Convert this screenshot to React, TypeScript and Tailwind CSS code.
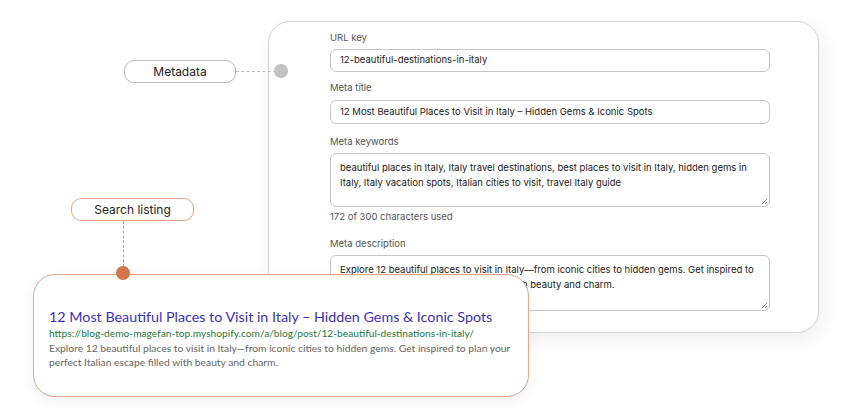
const form = "font-['Inter','Liberation_Sans',sans-serif]";
const serp = "font-['Lato','Noto_Sans',sans-serif]";

function Label({ children, className = "" }: { children: React.ReactNode; className?: string }) {
  return <div className={`h-[12px] text-[9.5px] leading-[12px] text-[#555] ${className}`}>{children}</div>;
}

function Field({ value, className = "" }: { value: string; className?: string }) {
  return (
    <div
      className={`flex items-center rounded-[6px] border border-[#c6c6c6] bg-white px-[9px] text-[9.5px] text-[#222] ${className}`}
    >
      {value}
    </div>
  );
}

function Grip() {
  return (
    <svg className="absolute bottom-[1px] right-[1px]" width="8" height="8" viewBox="0 0 8 8">
      <path d="M7 2 L2 7 M7 5 L5 7" stroke="#777" strokeWidth="0.9" />
    </svg>
  );
}

function Area({ text, className = "" }: { text: string; className?: string }) {
  return (
    <div
      className={`relative rounded-[6px] border border-[#c6c6c6] bg-white px-[9px] pt-[6px] text-[9.5px] leading-[15px] text-[#222] ${className}`}
    >
      {text}
      <Grip />
    </div>
  );
}

export default function App() {
  return (
    <div className={`relative h-[420px] w-[850px] overflow-hidden bg-white ${form}`}>
      {/* editor card */}
      <div className="ml-[268px] mt-[21px] flex h-[312px] w-[551px] flex-col rounded-[22px] border border-[#d4d4d4] bg-white pl-[61px] pr-[48px] pt-[10px] shadow-[4px_6px_18px_rgba(0,0,0,0.07)]">
        <Label>URL key</Label>
        <Field className="mt-[5px] h-[23px]" value="12-beautiful-destinations-in-italy" />
        <Label className="mt-[10px]">Meta title</Label>
        <Field
          className="mt-[6px] h-[24px]"
          value="12 Most Beautiful Places to Visit in Italy – Hidden Gems & Iconic Spots"
        />
        <Label className="mt-[12px]">Meta keywords</Label>
        <Area
          className="mt-[5px] h-[54px]"
          text="beautiful places in Italy, Italy travel destinations, best places to visit in Italy, hidden gems in Italy, Italy vacation spots, Italian cities to visit, travel Italy guide"
        />
        <div className="mt-[4px] h-[12px] text-[9.5px] leading-[12px] text-[#555]">172 of 300 characters used</div>
        <Label className="mt-[15px]">Meta description</Label>
        <Area
          className="mt-[5px] h-[56px]"
          text="Explore 12 beautiful places to visit in Italy—from iconic cities to hidden gems. Get inspired to plan your perfect Italian escape filled with beauty and charm."
        />
      </div>

      {/* Metadata annotation */}
      <div className="absolute left-[124px] top-[60px] flex h-[23px] w-[112px] items-center justify-center rounded-[10px] border border-[#bdbdbd] bg-white text-[12px] text-[#222]">
        Metadata
      </div>
      <div className="absolute left-[236px] top-[71px] w-[40px] border-t border-dashed border-[#bdbdbd]" />
      <div className="absolute left-[274px] top-[64px] h-[14px] w-[14px] rounded-full bg-[#c2c2c2]" />

      {/* search listing card */}
      <div
        className={`absolute left-[33px] top-[274px] h-[123px] w-[496px] rounded-[22px] border border-[#e3a688] bg-white pl-[15px] pt-[33px] shadow-[0_4px_14px_rgba(0,0,0,0.06)] ${serp}`}
      >
        <div className="text-[14.3px] leading-[18px] text-[#3a2fc2]">
          12 Most Beautiful Places to Visit in Italy – Hidden Gems &amp; Iconic Spots
        </div>
        <div className="mt-[1px] text-[10.2px] leading-[13px] text-[#1f7a3a]">
          https://blog-demo-magefan-top.myshopify.com/a/blog/post/12-beautiful-destinations-in-italy/
        </div>
        <div className="mt-[2px] w-[475px] text-[10.3px] leading-[13.5px] text-[#666]">
          Explore 12 beautiful places to visit in Italy—from iconic cities to hidden gems. Get inspired to plan your
          perfect Italian escape filled with beauty and charm.
        </div>
      </div>

      {/* Search listing annotation */}
      <div className="absolute left-[71px] top-[198px] flex h-[23px] w-[123px] items-center justify-center rounded-[10px] border border-[#e3a688] bg-white text-[12px] text-[#222]">
        Search listing
      </div>
      <div className="absolute left-[123px] top-[221px] h-[46px] border-l border-dashed border-[#d99a7a]" />
      <div className="absolute left-[116px] top-[266px] h-[14px] w-[14px] rounded-full bg-[#d6774b]" />
    </div>
  );
}
